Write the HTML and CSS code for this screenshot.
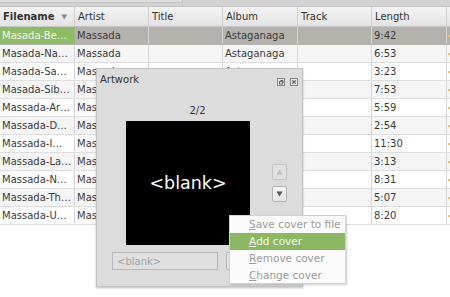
FILE: index.html
```html
<!DOCTYPE html>
<html>
<head>
<meta charset="utf-8">
<link rel="stylesheet" href="styles.css">
</head>
<body>
<div class="topband"><div class="topband-left"></div></div>
<div class="table">
  <div class="row head">
    <div class="cell bold">Filename<span class="sort">▼</span></div>
    <div class="cell">Artist</div>
    <div class="cell">Title</div>
    <div class="cell">Album</div>
    <div class="cell">Track</div>
    <div class="cell">Length</div>
    <div class="cell last"></div>
  </div>
  <div class="row sel">
    <div class="cell fname">Masada-Be…</div><div class="cell">Massada</div><div class="cell"></div><div class="cell">Astaganaga</div><div class="cell"></div><div class="cell">9:42</div><div class="cell last"><span class="dot"></span></div>
  </div>
  <div class="row alt">
    <div class="cell">Masada-Na…</div><div class="cell">Massada</div><div class="cell"></div><div class="cell">Astaganaga</div><div class="cell"></div><div class="cell">6:53</div><div class="cell last"><span class="dot"></span></div>
  </div>
  <div class="row">
    <div class="cell">Masada-Sa…</div><div class="cell">Massada</div><div class="cell"></div><div class="cell">Astaganaga</div><div class="cell"></div><div class="cell">3:23</div><div class="cell last"><span class="dot"></span></div>
  </div>
  <div class="row alt">
    <div class="cell">Masada-Sib…</div><div class="cell">Massada</div><div class="cell"></div><div class="cell">Astaganaga</div><div class="cell"></div><div class="cell">7:53</div><div class="cell last"><span class="dot"></span></div>
  </div>
  <div class="row">
    <div class="cell">Massada-Ar…</div><div class="cell">Massada</div><div class="cell"></div><div class="cell">Astaganaga</div><div class="cell"></div><div class="cell">5:59</div><div class="cell last"><span class="dot"></span></div>
  </div>
  <div class="row alt">
    <div class="cell">Massada-D…</div><div class="cell">Massada</div><div class="cell"></div><div class="cell">Astaganaga</div><div class="cell"></div><div class="cell">2:54</div><div class="cell last"><span class="dot"></span></div>
  </div>
  <div class="row">
    <div class="cell">Massada-I…</div><div class="cell">Massada</div><div class="cell"></div><div class="cell">Astaganaga</div><div class="cell"></div><div class="cell">11:30</div><div class="cell last"><span class="dot"></span></div>
  </div>
  <div class="row alt">
    <div class="cell">Massada-La…</div><div class="cell">Massada</div><div class="cell"></div><div class="cell">Astaganaga</div><div class="cell"></div><div class="cell">3:13</div><div class="cell last"><span class="dot"></span></div>
  </div>
  <div class="row">
    <div class="cell">Massada-N…</div><div class="cell">Massada</div><div class="cell"></div><div class="cell">Astaganaga</div><div class="cell"></div><div class="cell">8:31</div><div class="cell last"><span class="dot"></span></div>
  </div>
  <div class="row alt">
    <div class="cell">Massada-Th…</div><div class="cell">Massada</div><div class="cell"></div><div class="cell">Astaganaga</div><div class="cell"></div><div class="cell">5:07</div><div class="cell last"><span class="dot"></span></div>
  </div>
  <div class="row">
    <div class="cell">Massada-U…</div><div class="cell">Massada</div><div class="cell"></div><div class="cell">Astaganaga</div><div class="cell"></div><div class="cell">8:20</div><div class="cell last"><span class="dot"></span></div>
  </div>
</div>

<div class="dialog">
  <div class="dlg-title">
    <span class="dlg-name">Artwork</span>
    <span class="dlg-icons">
      <span class="ticon"><svg width="8" height="8" viewBox="0 0 8 8"><rect x="0.5" y="0.5" width="7" height="7" fill="#e8e8e8" stroke="#8a8a8a"/><rect x="2.5" y="3.5" width="3" height="2.5" fill="none" stroke="#6a6a6a"/><path d="M3.5 3.5V2.5H6V5" fill="none" stroke="#6a6a6a"/></svg></span>
      <span class="ticon"><svg width="8" height="8" viewBox="0 0 8 8"><rect x="0.5" y="0.5" width="7" height="7" fill="#e8e8e8" stroke="#8a8a8a"/><path d="M2.3 2.3L5.7 5.7M5.7 2.3L2.3 5.7" stroke="#555" stroke-width="1.1"/></svg></span>
    </span>
  </div>
  <div class="counter">2/2</div>
  <div class="art-row">
    <div class="art">&lt;blank&gt;</div>
    <div class="navs">
      <div class="nav disabled"><svg width="7" height="6" viewBox="0 0 7 6"><path d="M3.5 0.5L6.5 5.5H0.5Z" fill="#bdbdbd"/></svg></div>
      <div class="nav"><svg width="7" height="6" viewBox="0 0 7 6"><path d="M0.5 0.5H6.5L3.5 5.5Z" fill="#555"/></svg></div>
    </div>
  </div>
  <div class="bottom-row">
    <div class="input">&lt;blank&gt;</div>
    <div class="btn"></div>
  </div>
</div>

<div class="menu">
  <div class="mi dis"><u>S</u>ave cover to file</div>
  <div class="mi act"><u>A</u>dd cover</div>
  <div class="mi dis"><u>R</u>emove cover</div>
  <div class="mi dis"><u>C</u>hange cover</div>
</div>
</body>
</html>
```

FILE: styles.css
```css
* { box-sizing: border-box; }
html, body { margin: 0; padding: 0; }
body {
  width: 450px;
  height: 297px;
  overflow: hidden;
  background: #ffffff;
  font-family: "DejaVu Sans", sans-serif;
  font-size: 10px;
  color: #3a3a3a;
  position: relative;
}
.topband {
  height: 7px;
  background: #d3d3d3;
  border-bottom: 1px solid #c4c4c4;
}
.topband-left {
  width: 183px;
  height: 3px;
  background: #dedede;
  border-right: 1px solid #c0c0c0;
  border-bottom: 1px solid #c6c6c6;
}
.table { display: flex; flex-direction: column; }
.row {
  display: grid;
  grid-template-columns: 75px 74px 74px 75px 74px 75px 1fr;
  height: 18px;
  border-bottom: 1px solid #dedede;
  background: #ffffff;
}
.row.alt { background: #f5f5f5; }
.row.head {
  height: 20px;
  background: linear-gradient(#f4f4f4, #e3e3e3);
  border-bottom: 1px solid #c8c8c8;
  color: #333;
}
.row.head .cell { border-right: 1px solid #d0d0d0; padding-left: 3px; }
.row.sel { background: #b5b2ad; border-bottom: 1px solid #b5b2ad; }
.cell {
  display: flex;
  align-items: center;
  padding-left: 2px;
  border-right: 1px solid #d6d6d6;
  white-space: nowrap;
  overflow: hidden;
}
.cell.last { border-right: none; padding-left: 1px; }
.bold { font-weight: bold; }
.sort { font-size: 7px; color: #8a8a8a; margin-left: 7px; }
.fname { background: #8fbb66; color: #f2f7ee; border-right: none; }
.dot { width: 2px; height: 2px; background: #f0c070; display: block; }

.dialog {
  position: absolute;
  left: 96px;
  top: 68px;
  width: 207px;
  height: 219px;
  background: #dcdcdc;
  border: 1px solid #c2c2c2;
  box-shadow: 0 1px 2px rgba(0,0,0,0.25);
  display: flex;
  flex-direction: column;
}
.dlg-title {
  height: 19px;
  display: flex;
  align-items: center;
  justify-content: space-between;
  padding: 0 4px 0 3px;
  color: #333;
}
.dlg-name { padding-top: 1px; }
.dlg-icons { display: flex; gap: 5px; padding-top: 6px; }
.ticon { display: block; width: 8px; height: 8px; line-height: 0; }
.counter {
  margin-top: 16px;
  height: 14px;
  line-height: 14px;
  text-align: center;
  padding-right: 4px;
  color: #333;
}
.art-row {
  display: flex;
  align-items: center;
  margin-top: 3px;
  padding-left: 29px;
}
.art {
  width: 124px;
  height: 124px;
  background: #000;
  color: #fff;
  font-size: 17.5px;
  display: flex;
  align-items: center;
  justify-content: center;
}
.navs {
  display: flex;
  flex-direction: column;
  gap: 6px;
  margin-left: 22px;
}
.nav {
  width: 15px;
  height: 16px;
  border: 1px solid #b4b4b4;
  border-radius: 2px;
  background: linear-gradient(#f6f6f6, #e4e4e4);
  display: flex;
  align-items: center;
  justify-content: center;
}
.nav.disabled { background: #e2e2e2; border-color: #c4c4c4; }
.bottom-row {
  display: flex;
  margin-top: 7px;
  padding-left: 15px;
  gap: 8px;
}
.input {
  width: 106px;
  height: 18px;
  border: 1px solid #b8b8b8;
  background: #e0e0e0;
  color: #a2a2a2;
  padding-left: 4px;
  display: flex;
  align-items: center;
}
.btn {
  width: 40px;
  height: 18px;
  border: 1px solid #b4b4b4;
  border-radius: 2px;
  background: #e6e6e6;
}
.menu {
  position: absolute;
  left: 229px;
  top: 215px;
  width: 117px;
  height: 69px;
  background: #fbfbfb;
  border: 1px solid #d2d2d2;
  box-shadow: 1px 1px 2px rgba(0,0,0,0.2);
  display: flex;
  flex-direction: column;
  font-size: 10.5px;
}
.mi {
  height: 17px;
  display: flex;
  align-items: center;
  padding-left: 19px;
  white-space: nowrap;
}
.mi.dis { color: #9c9c9c; }
.mi.act { background: #8db863; color: #f5f9f1; }
.mi u { text-underline-offset: 1px; }
```
